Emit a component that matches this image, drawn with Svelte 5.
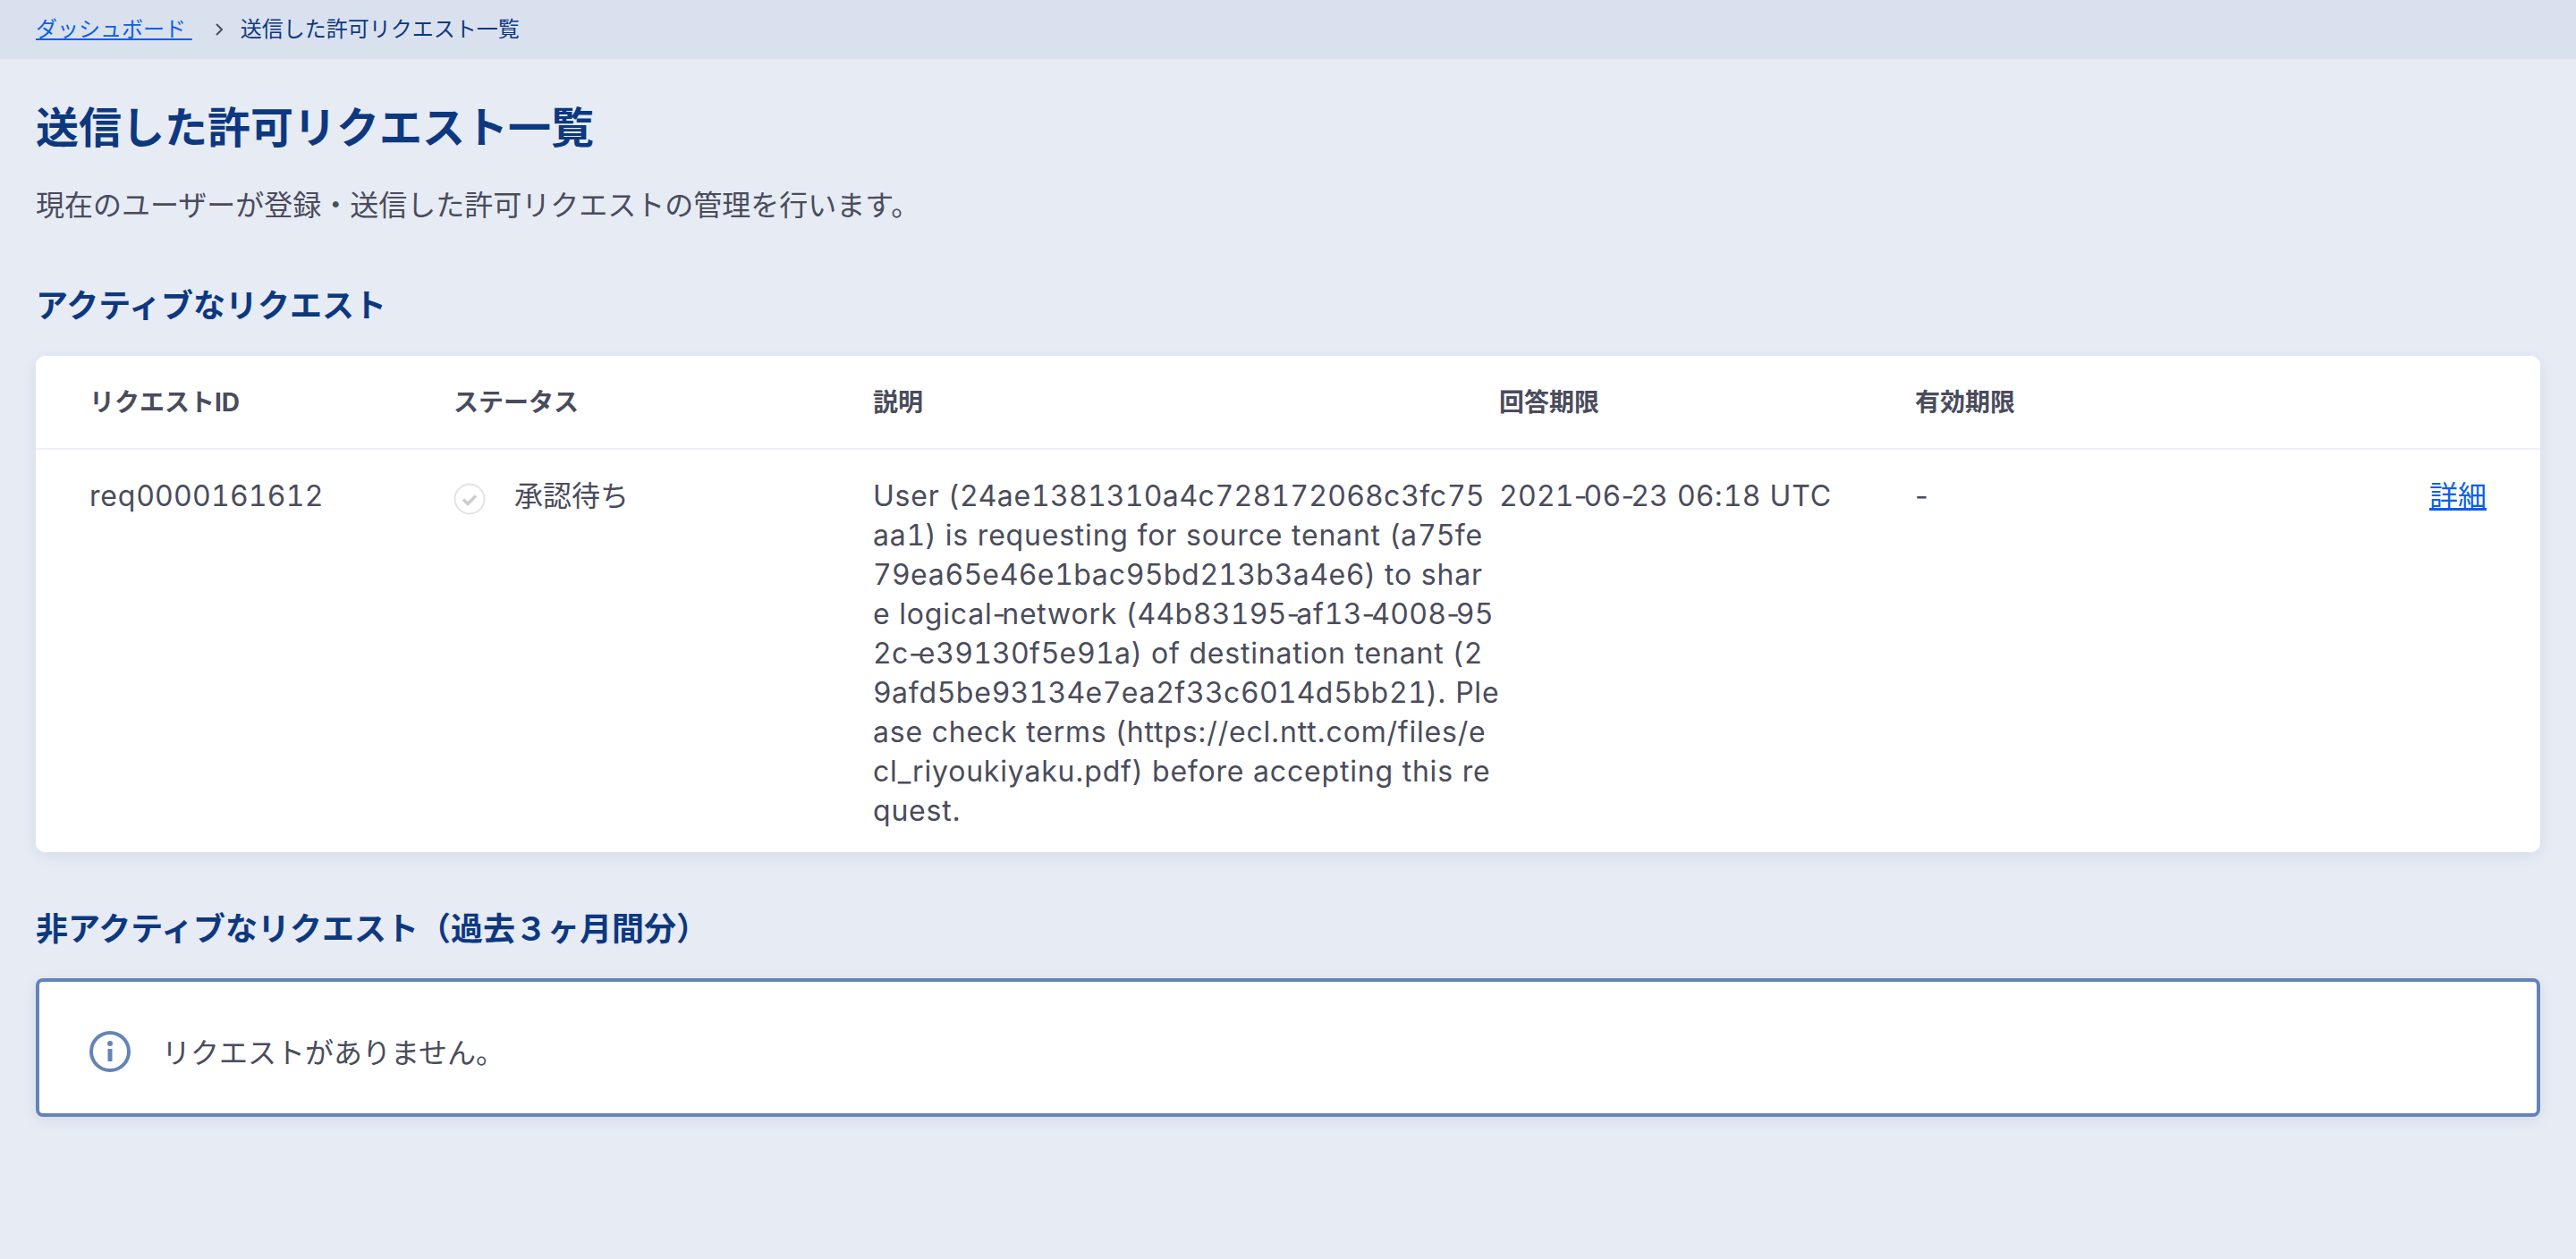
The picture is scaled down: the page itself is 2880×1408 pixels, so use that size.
<script lang="ts">
	const columns = ['リクエストID', 'ステータス', '説明', '回答期限', '有効期限', ''];

	const descriptionLines = [
		'User (24ae1381310a4c728172068c3fc75',
		'aa1) is requesting for source tenant (a75fe',
		'79ea65e46e1bac95bd213b3a4e6) to shar',
		'e logical-network (44b83195-af13-4008-95',
		'2c-e39130f5e91a) of destination tenant (2',
		'9afd5be93134e7ea2f33c6014d5bb21). Ple',
		'ase check terms (https://ecl.ntt.com/files/e',
		'cl_riyoukiyaku.pdf) before accepting this re',
		'quest.'
	];

	// digits run wider and hyphens tighter than the letters in the original font
	const runs = (text: string) => text.split(/(\d+|-)/).filter(Boolean);
	const runClass = (run: string) => (run === '-' ? 'hyphen' : /\d/.test(run) ? 'digits' : 'letters');
</script>

{#snippet latin(text: string)}
	{#each runs(text) as run}<span class={runClass(run)}>{run}</span>{/each}
{/snippet}

<nav class="breadcrumb">
	<a href="#top" class="link">ダッシュボード&nbsp;</a>
	<svg class="crumb-sep" width="12" height="20" viewBox="0 0 12 20" fill="none" stroke="currentColor" stroke-width="2">
		<path d="m3 4 6 6-6 6" />
	</svg>
	<span>送信した許可リクエスト一覧</span>
</nav>

<main class="page">
	<h1>送信した許可リクエスト一覧</h1>
	<p class="lead">現在のユーザーが登録・送信した許可リクエストの管理を行います。</p>

	<h2 class="active-title">アクティブなリクエスト</h2>
	<section class="card">
		<div class="row head">
			{#each columns as column}
				<div>{column}</div>
			{/each}
		</div>
		<div class="row body">
			<div>{@render latin('req0000161612')}</div>
			<div class="status">
				<svg width="36" height="36" viewBox="0 0 36 36" fill="none">
					<circle cx="18" cy="18" r="16.5" stroke="#e3e3e3" stroke-width="2" />
					<path d="m11 18.5 5 5 9-9" stroke="#cccccc" stroke-width="3.5" />
				</svg>
				<span>承認待ち</span>
			</div>
			<div class="description">
				{#each descriptionLines as line}
					<div>{@render latin(line)}</div>
				{/each}
			</div>
			<div>{@render latin('2021-06-23 06:18 UTC')}</div>
			<div>-</div>
			<div class="action"><a href="#top" class="link">詳細</a></div>
		</div>
	</section>

	<h2 class="inactive-title">非アクティブなリクエスト（過去３ヶ月間分）</h2>
	<section class="notice">
		<svg width="46" height="46" viewBox="0 0 46 46" fill="none">
			<circle cx="23" cy="23" r="21" stroke="#6484b8" stroke-width="4" />
			<circle cx="23" cy="14" r="3" fill="#6484b8" />
			<rect x="20.5" y="20" width="5" height="14" fill="#6484b8" />
		</svg>
		<span class="notice-text">リクエストがありません。</span>
	</section>
</main>

<style>
	:global(body) {
		background: #e6ebf4;
		color: #4a4c5c;
		font-family: Inter, "Noto Sans CJK JP", sans-serif;
	}
	.breadcrumb {
		display: flex;
		align-items: center;
		height: 66px;
		padding: 0 40px;
		box-sizing: border-box;
		background: #dae1ee;
		color: #0d3880;
		font-size: 24px;
		line-height: 34px;
	}
	.crumb-sep {
		margin: 0 18px 0 24px;
		color: #4a4c5c;
	}
	.link {
		color: #0a5fe6;
		text-decoration: underline;
	}
	.page {
		padding: 0 40px;
		min-height: 1342px;
		box-sizing: border-box;
	}
	h1 {
		margin: 0;
		padding-top: 45px;
		color: #0d3880;
		font-size: 48px;
		line-height: 64px;
		font-weight: 700;
	}
	.lead {
		margin: 33px 0 0;
		font-size: 32px;
		line-height: 44px;
	}
	h2 {
		margin: 0;
		color: #0d3880;
		font-size: 36px;
		line-height: 48px;
		font-weight: 700;
	}
	.active-title {
		margin-top: 66px;
	}
	.card {
		margin-top: 32px;
		background: #fff;
		border-radius: 10px;
		box-shadow: 0 4px 16px rgba(40, 60, 110, 0.08);
	}
	.row {
		display: grid;
		grid-template-columns: 407px 469px 700px 465px 1fr auto;
		padding: 0 60px;
	}
	.head {
		align-items: center;
		height: 105px;
		padding-bottom: 3px;
		border-bottom: 2px solid #edf0f6;
		box-sizing: border-box;
		font-size: 28px;
		font-weight: 700;
	}
	.body {
		padding-top: 30px;
		padding-bottom: 24px;
		font-size: 32px;
		line-height: 44px;
	}
	.digits {
		font-variant-numeric: tabular-nums;
		letter-spacing: 0.2px;
	}
	.letters {
		letter-spacing: 0.8px;
	}
	.hyphen {
		letter-spacing: -4px;
	}
	.status {
		display: flex;
		align-items: flex-start;
		gap: 32px;
	}
	.status svg {
		margin-top: 7px;
		flex: none;
	}
	.description div {
		white-space: nowrap;
	}
	.action {
		text-align: right;
	}
	.inactive-title {
		margin-top: 62px;
	}
	.notice {
		display: flex;
		align-items: center;
		gap: 35px;
		margin-top: 31px;
		padding: 9px 56px 0;
		height: 155px;
		box-sizing: border-box;
		background: #fff;
		border: 4px solid #6484b8;
		border-radius: 8px;
		box-shadow: 0 4px 16px rgba(40, 60, 110, 0.08);
		font-size: 32px;
		line-height: 44px;
	}
	.notice svg {
		flex: none;
	}
	.notice-text {
		margin-top: 3px;
	}
</style>
